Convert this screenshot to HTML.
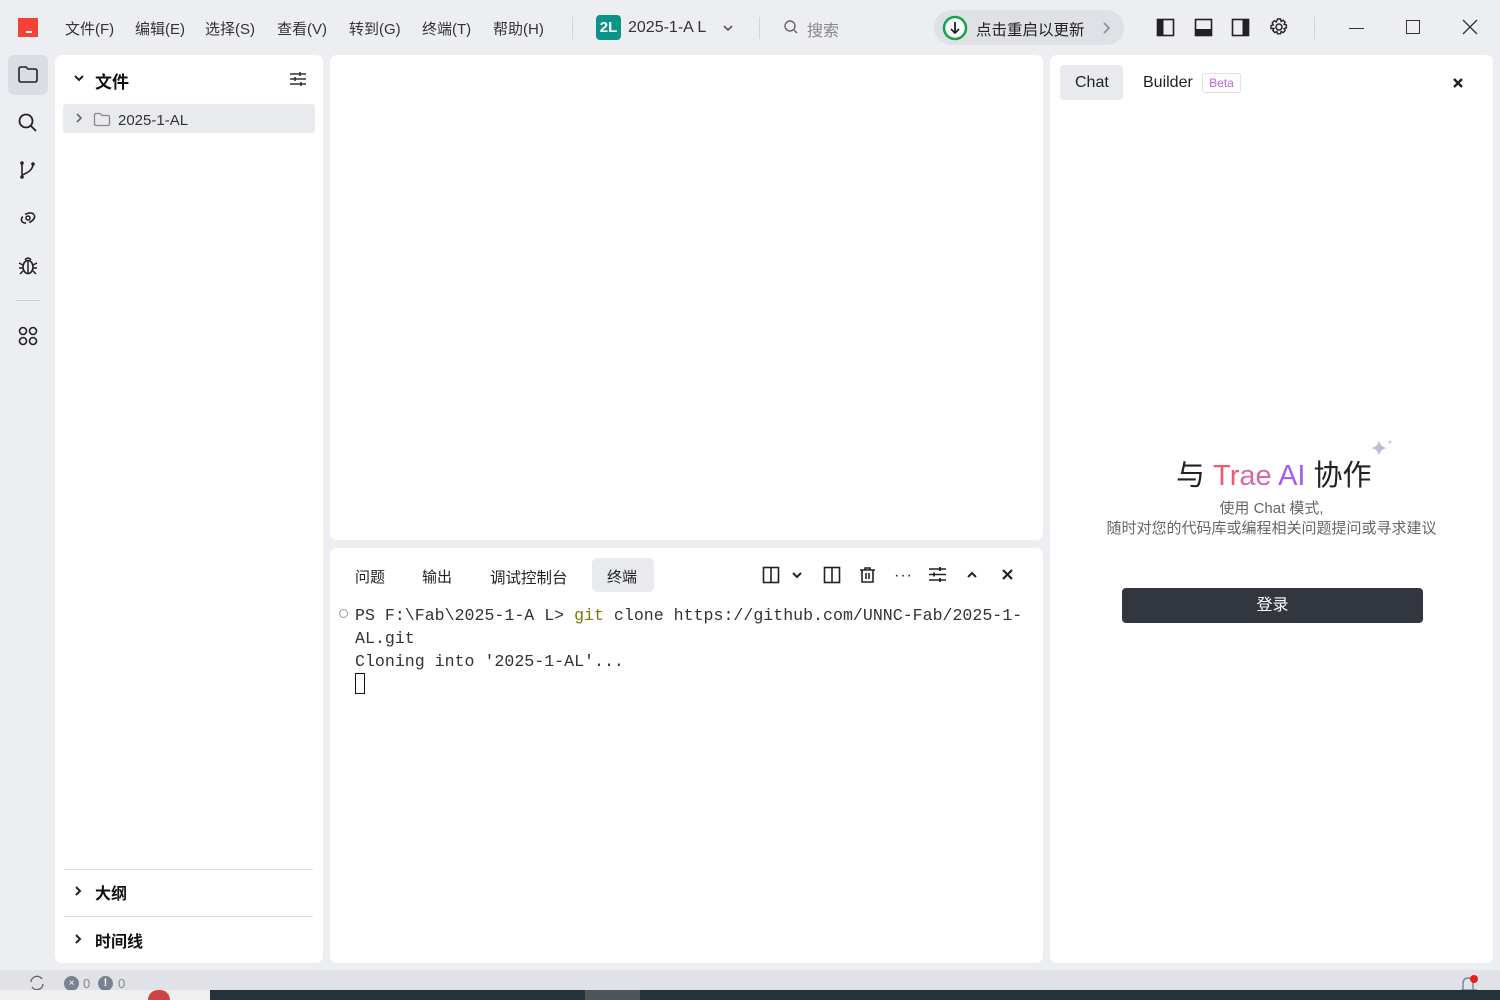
<!DOCTYPE html>
<html><head><meta charset="utf-8"><style>
*{margin:0;padding:0;box-sizing:border-box}
body{width:1500px;height:1000px;overflow:hidden;background:#edeef2;font-family:"Liberation Sans","Noto Sans CJK SC",sans-serif;color:#222;position:relative}
.abs{position:absolute}
.menu span{position:absolute;top:18px;font-size:15px;color:#333}
.panel{position:absolute;background:#fff;border-radius:7px}
svg{position:absolute}
.mono{font-family:"Liberation Mono","Noto Sans CJK SC",monospace;font-size:16.6px;color:#333}
</style></head><body>
<div class="abs" style="left:18px;top:18px;width:20px;height:19px;background:#f44336"></div>
<div class="abs" style="left:26px;top:31px;width:6px;height:2px;background:#fff"></div>
<div class="menu">
<span style="left:65px">文件(F)</span><span style="left:135px">编辑(E)</span><span style="left:205px">选择(S)</span><span style="left:277px">查看(V)</span><span style="left:349px">转到(G)</span><span style="left:422px">终端(T)</span><span style="left:493px">帮助(H)</span>
</div>
<div class="abs" style="left:572px;top:17px;width:1px;height:22px;background:#d0d3da"></div>
<div class="abs" style="left:596px;top:15px;width:25px;height:25px;background:#0d9488;border-radius:4px;color:#fff;font-weight:bold;font-size:15px;line-height:25px;text-align:center">2L</div>
<div class="abs" style="left:628px;top:19px;font-size:16px;color:#333">2025-1-A L</div>
<svg style="left:721px;top:21px" width="14" height="14" viewBox="0 0 14 14"><path d="M3 5l4 4 4-4" stroke="#555" stroke-width="1.6" fill="none"/></svg>
<div class="abs" style="left:759px;top:17px;width:1px;height:22px;background:#d0d3da"></div>
<svg style="left:783px;top:19px" width="16" height="16" viewBox="0 0 16 16"><circle cx="7" cy="7" r="5" stroke="#666" stroke-width="1.4" fill="none"/><path d="M11 11l3 3" stroke="#666" stroke-width="1.4"/></svg>
<div class="abs" style="left:807px;top:17px;font-size:16px;color:#888">搜索</div>
<div class="abs" style="left:934px;top:10px;width:190px;height:35px;background:#dfe1e6;border-radius:18px"></div>
<svg style="left:941px;top:14px" width="28" height="28" viewBox="0 0 28 28"><circle cx="14" cy="14" r="11" stroke="#16a34a" stroke-width="2.5" fill="#fff"/><path d="M14 8v11M10 15l4 4 4-4" stroke="#222" stroke-width="1.8" fill="none"/></svg>
<div class="abs" style="left:976px;top:18px;font-size:15.5px;color:#222">点击重启以更新</div>
<svg style="left:1101px;top:21px" width="12" height="14" viewBox="0 0 12 14"><path d="M3 2l5 5-5 5" stroke="#8a94a6" stroke-width="1.8" fill="none"/></svg>
<svg style="left:1156px;top:18px" width="20" height="20" viewBox="0 0 20 20"><rect x="1.5" y="1.5" width="16" height="16" stroke="#222" stroke-width="1.6" fill="none"/><rect x="1.5" y="1.5" width="6" height="16" fill="#222"/></svg>
<svg style="left:1194px;top:18px" width="20" height="20" viewBox="0 0 20 20"><rect x="1.5" y="1.5" width="16" height="16" stroke="#222" stroke-width="1.6" fill="none"/><rect x="1.5" y="11" width="16" height="6.5" fill="#222"/></svg>
<svg style="left:1231px;top:18px" width="20" height="20" viewBox="0 0 20 20"><rect x="1.5" y="1.5" width="16" height="16" stroke="#222" stroke-width="1.6" fill="none"/><rect x="11.5" y="1.5" width="6" height="16" fill="#222"/></svg>
<svg style="left:1269px;top:17px" width="20" height="20" viewBox="0 0 20 20"><circle cx="10" cy="10" r="3" stroke="#222" stroke-width="1.5" fill="none"/><path d="M8.5 2h3l.6 2.3 2-1.1 2.1 2.1-1.1 2 2.3.6v3l-2.3.6 1.1 2-2.1 2.1-2-1.1-.6 2.3h-3l-.6-2.3-2 1.1-2.1-2.1 1.1-2L2 11.5v-3l2.3-.6-1.1-2 2.1-2.1 2 1.1z" stroke="#222" stroke-width="1.4" fill="none"/></svg>
<div class="abs" style="left:1314px;top:17px;width:1px;height:22px;background:#d0d3da"></div>
<div class="abs" style="left:1349px;top:28px;width:15px;height:1px;background:#333"></div>
<div class="abs" style="left:1406px;top:20px;width:14px;height:14px;border:1.3px solid #333"></div>
<svg style="left:1462px;top:19px" width="16" height="16" viewBox="0 0 16 16"><path d="M1 1l14 14M15 1L1 15" stroke="#333" stroke-width="1.3"/></svg>
<div class="abs" style="left:8px;top:55px;width:40px;height:40px;background:#dadde3;border-radius:6px"></div>
<svg style="left:17px;top:65px" width="22" height="20" viewBox="0 0 22 20"><path d="M2 4q0-2 2-2h5l2 2h7q2 0 2 2v9q0 2-2 2H4q-2 0-2-2z" stroke="#222" stroke-width="1.6" fill="none"/></svg>
<svg style="left:17px;top:112px" width="22" height="22" viewBox="0 0 22 22"><circle cx="9" cy="9" r="6.5" stroke="#222" stroke-width="1.8" fill="none"/><path d="M14 14l5 5" stroke="#222" stroke-width="1.8"/></svg>
<svg style="left:18px;top:159px" width="20" height="22" viewBox="0 0 20 22"><circle cx="4" cy="4" r="1.8" fill="#222"/><circle cx="4" cy="18" r="1.8" fill="#222"/><circle cx="15" cy="5" r="1.8" fill="#222"/><path d="M4 4v14M15 5q0 7-11 11" stroke="#222" stroke-width="1.6" fill="none"/></svg>
<svg style="left:17px;top:206px" width="22" height="22" viewBox="0 0 22 22"><ellipse cx="11" cy="12" rx="7" ry="4.5" transform="rotate(-25 11 12)" stroke="#222" stroke-width="1.6" fill="none" stroke-dasharray="10 3"/><circle cx="11" cy="12" r="2" stroke="#222" stroke-width="1.5" fill="none"/></svg>
<svg style="left:17px;top:254px" width="22" height="22" viewBox="0 0 22 22"><ellipse cx="11" cy="13" rx="5" ry="6.5" stroke="#222" stroke-width="1.6" fill="none"/><path d="M8 6q3-4 6 0M11 7v12M2 9l4 2M20 9l-4 2M2 14h4M20 14h-4M3 20l3-3M19 20l-3-3" stroke="#222" stroke-width="1.5" fill="none"/></svg>
<div class="abs" style="left:16px;top:300px;width:24px;height:1px;background:#c9d0dc"></div>
<svg style="left:18px;top:326px" width="20" height="20" viewBox="0 0 20 20"><g stroke="#222" stroke-width="1.6" fill="none"><rect x="1.5" y="1.5" width="7" height="7" rx="3.5"/><rect x="11.5" y="1.5" width="7" height="7" rx="3.5"/><rect x="1.5" y="11.5" width="7" height="7" rx="3.5"/><rect x="11.5" y="11.5" width="7" height="7" rx="3.5"/></g></svg>
<div class="panel" style="left:55px;top:55px;width:268px;height:908px"></div>
<svg style="left:72px;top:73px" width="14" height="12" viewBox="0 0 14 12"><path d="M3 3l4 4 4-4" stroke="#222" stroke-width="2" fill="none"/></svg>
<div class="abs" style="left:95px;top:68px;font-size:17px;font-weight:bold;color:#111">文件</div>
<svg style="left:289px;top:71px" width="18" height="16" viewBox="0 0 18 16"><path d="M1 3h16M1 8h16M1 13h16" stroke="#333" stroke-width="1.4"/><path d="M11 1v4M6 6v4M12 11v4" stroke="#333" stroke-width="1.6"/></svg>
<div class="abs" style="left:63px;top:104px;width:252px;height:29px;background:#e8eaee;border-radius:3px"></div>
<svg style="left:74px;top:112px" width="10" height="12" viewBox="0 0 10 12"><path d="M3 2l4 4-4 4" stroke="#666" stroke-width="1.6" fill="none"/></svg>
<svg style="left:93px;top:112px" width="18" height="15" viewBox="0 0 18 15"><path d="M1.5 3q0-1.5 1.5-1.5h4l2 2h6q1.5 0 1.5 1.5v7q0 1.5-1.5 1.5H3q-1.5 0-1.5-1.5z" stroke="#888" stroke-width="1.3" fill="none"/></svg>
<div class="abs" style="left:118px;top:112px;font-size:15px;color:#333">2025-1-AL</div>
<div class="abs" style="left:64px;top:869px;width:249px;height:1px;background:#dde1e7"></div>
<div class="abs" style="left:64px;top:916px;width:249px;height:1px;background:#dde1e7"></div>
<svg style="left:73px;top:884px" width="10" height="14" viewBox="0 0 10 14"><path d="M3 3l4 4-4 4" stroke="#222" stroke-width="2" fill="none"/></svg>
<div class="abs" style="left:95px;top:880px;font-size:16px;font-weight:bold;color:#111">大纲</div>
<svg style="left:73px;top:932px" width="10" height="14" viewBox="0 0 10 14"><path d="M3 3l4 4-4 4" stroke="#222" stroke-width="2" fill="none"/></svg>
<div class="abs" style="left:95px;top:928px;font-size:16px;font-weight:bold;color:#111">时间线</div>
<div class="panel" style="left:330px;top:55px;width:713px;height:485px"></div>
<div class="panel" style="left:330px;top:548px;width:713px;height:415px"></div>
<div class="abs" style="left:592px;top:558px;width:62px;height:34px;background:#e8eaee;border-radius:5px"></div>
<div class="abs" style="left:355px;top:566px;font-size:15px;color:#222">问题</div>
<div class="abs" style="left:422px;top:566px;font-size:15px;color:#222">输出</div>
<div class="abs" style="left:490px;top:566px;font-size:15.5px;color:#222">调试控制台</div>
<div class="abs" style="left:607px;top:566px;font-size:15px;color:#222">终端</div>
<svg style="left:762px;top:566px" width="18" height="18" viewBox="0 0 18 18"><rect x="1.5" y="1.5" width="15" height="15" stroke="#222" stroke-width="1.6" fill="none"/><path d="M9 1.5v15" stroke="#222" stroke-width="1.6"/></svg>
<svg style="left:790px;top:568px" width="14" height="14" viewBox="0 0 14 14"><path d="M3 5l4 4 4-4" stroke="#222" stroke-width="2" fill="none"/></svg>
<svg style="left:823px;top:566px" width="18" height="18" viewBox="0 0 18 18"><rect x="1.5" y="1.5" width="15" height="15" stroke="#222" stroke-width="1.6" fill="none"/><path d="M9 1.5v15" stroke="#222" stroke-width="1.6"/></svg>
<svg style="left:859px;top:566px" width="17" height="18" viewBox="0 0 17 18"><path d="M1 4h15M6 4V2h5v2M3 4v12h11V4M7 7v6M10 7v6" stroke="#222" stroke-width="1.6" fill="none"/></svg>
<div class="abs" style="left:894px;top:567px;font-size:16px;color:#222;letter-spacing:1px">···</div>
<svg style="left:928px;top:566px" width="19" height="17" viewBox="0 0 19 17"><path d="M1 3h17M1 8.5h17M1 14h17" stroke="#222" stroke-width="1.4"/><path d="M12 1v4M6 6.5v4M12 12v4" stroke="#222" stroke-width="1.8"/></svg>
<svg style="left:965px;top:568px" width="14" height="14" viewBox="0 0 14 14"><path d="M3 9l4-4 4 4" stroke="#222" stroke-width="2" fill="none"/></svg>
<svg style="left:1001px;top:568px" width="13" height="13" viewBox="0 0 13 13"><path d="M2 2l9 9M11 2l-9 9" stroke="#222" stroke-width="2.2"/></svg>
<div class="abs" style="left:339px;top:609px;width:9px;height:9px;border:1px solid #999;border-radius:50%"></div>
<div class="abs mono" style="left:355px;top:604px;line-height:23px;white-space:pre">PS F:\Fab\2025-1-A L> <span style="color:#7a7a00">git</span> clone https://github.com/UNNC-Fab/2025-1-
AL.git
Cloning into '2025-1-AL'...</div>
<div class="abs" style="left:355px;top:673px;width:10px;height:21px;border:1.3px solid #111"></div>
<div class="panel" style="left:1050px;top:55px;width:443px;height:908px"></div>
<div class="abs" style="left:1060px;top:65px;width:63px;height:35px;background:#e8eaee;border-radius:4px"></div>
<div class="abs" style="left:1075px;top:74px;font-size:16px;color:#222">Chat</div>
<div class="abs" style="left:1143px;top:74px;font-size:16px;color:#222">Builder</div>
<div class="abs" style="left:1202px;top:73px;width:39px;height:20px;border:1px solid #dfe1e6;border-radius:3px;font-size:12px;line-height:18px;text-align:center;color:#c060e0">Beta</div>
<svg style="left:1452px;top:77px" width="12" height="12" viewBox="0 0 12 12"><path d="M2 2l8 8M10 2l-8 8" stroke="#222" stroke-width="2.4"/></svg>
<svg style="left:1366px;top:437px" width="30" height="24" viewBox="0 0 30 24"><path d="M13 3q1 7 8 8-7 1-8 8-1-7-8-8 7-1 8-8z" fill="#b6bfd0"/><path d="M24 2q.4 2.5 3 3-2.6.5-3 3-.4-2.5-3-3 2.6-.5 3-3z" fill="#cfd5e0"/></svg>
<div class="abs" style="left:1176px;top:452px;font-size:29px;color:#222;white-space:nowrap">与 <span style="color:#ee5a6f">Tr</span><span style="color:#d86aa0">ae</span> <span style="color:#a65cf2">AI</span> 协作</div>
<div class="abs" style="left:1050px;top:499px;width:443px;text-align:center;font-size:15px;color:#666;line-height:20px">使用 Chat 模式,<br>随时对您的代码库或编程相关问题提问或寻求建议</div>
<div class="abs" style="left:1122px;top:588px;width:301px;height:35px;background:#31363f;border-radius:4px;color:#fff;font-size:16px;line-height:36px;text-align:center">登录</div>
<div class="abs" style="left:0;top:970px;width:1500px;height:20px;background:#e0e2e7"></div>
<svg style="left:28px;top:975px" width="18" height="16" viewBox="0 0 18 16"><path d="M3 7a6 6 0 0 1 11-3M15 9a6 6 0 0 1-11 3" stroke="#666" stroke-width="1.4" fill="none"/></svg>
<div class="abs" style="left:64px;top:976px;width:15px;height:15px;border-radius:50%;background:#7a8290;color:#fff;font-size:10px;text-align:center;line-height:15px">×</div>
<div class="abs" style="left:83px;top:976px;font-size:13px;color:#888">0</div>
<div class="abs" style="left:98px;top:976px;width:15px;height:15px;border-radius:50%;background:#7a8290;color:#fff;font-size:11px;font-weight:bold;text-align:center;line-height:15px">!</div>
<div class="abs" style="left:118px;top:976px;font-size:13px;color:#888">0</div>
<svg style="left:1460px;top:974px" width="20" height="16" viewBox="0 0 20 16"><path d="M3 16v-6q0-6 5-6t5 6v6M1 16h16" stroke="#7a8aa0" stroke-width="1.5" fill="none"/><circle cx="14" cy="5" r="4" fill="#e42020"/></svg>
<div class="abs" style="left:0;top:990px;width:1500px;height:10px;background:#25323a"></div>
<div class="abs" style="left:0;top:990px;width:210px;height:10px;background:#efefef"></div>
<div class="abs" style="left:148px;top:990px;width:22px;height:10px;background:#c44;border-radius:10px 10px 0 0"></div>
<div class="abs" style="left:585px;top:990px;width:55px;height:10px;background:#4e5559"></div>
</body></html>
